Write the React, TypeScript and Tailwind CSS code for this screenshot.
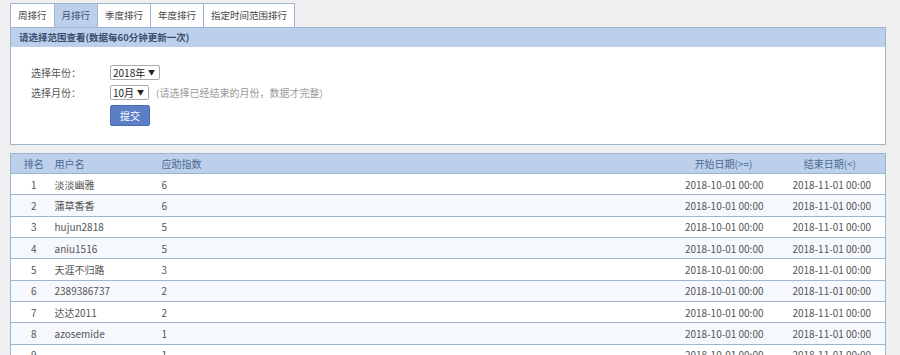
import React from "react";

const rows = [
  { rank: 1, name: "淡淡幽雅", score: 6 },
  { rank: 2, name: "蒲草香香", score: 6 },
  { rank: 3, name: "hujun2818", score: 5 },
  { rank: 4, name: "aniu1516", score: 5 },
  { rank: 5, name: "天涯不归路", score: 3 },
  { rank: 6, name: "2389386737", score: 2 },
  { rank: 7, name: "达达2011", score: 2 },
  { rank: 8, name: "azosemide", score: 1 },
  { rank: 9, name: "", score: 1 },
];

const tabs = ["周排行", "月排行", "季度排行", "年度排行", "指定时间范围排行"];

export default function App() {
  return (
    <div className="min-h-[355px] bg-[#efefef] pl-[10px] pt-[3px] text-[10px] text-[#555] [font-family:'Noto_Sans_CJK_SC','Noto_Sans',sans-serif]">
      <div className="w-[876px]">
        <div className="flex">
          {tabs.map((t, i) => (
            <div
              key={t}
              className={
                "h-[24px] border border-b-0 border-[#9db4d2] px-[7px] text-[9.5px] leading-[22px] -ml-px first:ml-0 " +
                (i === 1 ? "bg-[#bcd0ec] text-[#3a4f6e]" : "bg-white text-[#444]")
              }
            >
              {t}
            </div>
          ))}
        </div>
        <div className="border border-[#9db4d2] bg-white">
          <div className="h-[19px] bg-[#bcd0ec] pl-[8px] text-[9.5px] leading-[19px] font-semibold text-[#3a4f6e]">
            请选择范围查看(数据每60分钟更新一次)
          </div>
          <div className="pl-[20px] pt-[17px] pb-[18px]">
            <div className="flex items-center h-[16px]">
              <span className="w-[79px]">选择年份：</span>
              <div className="flex h-[15px] w-[50px] items-center border border-[#aaa] rounded-[2px] pl-[2px] text-[#222]">
                2018年<span className="ml-auto mr-[4px] text-[7px]">▼</span>
              </div>
            </div>
            <div className="flex items-center h-[16px] mt-[4px]">
              <span className="w-[79px]">选择月份：</span>
              <div className="flex h-[15px] w-[39px] items-center border border-[#aaa] rounded-[2px] pl-[2px] text-[#222]">
                10月<span className="ml-auto mr-[4px] text-[7px]">▼</span>
              </div>
              <span className="ml-[7px] text-[#999]">(请选择已经结束的月份，数据才完整)</span>
            </div>
            <button className="ml-[79px] mt-[5px] h-[21px] w-[40px] rounded-[2px] bg-[#5b7ec6] text-white border border-[#4a6cb0]">
              提交
            </button>
          </div>
        </div>
        <table className="mt-[8px] w-full border-collapse border border-[#9db4d2] bg-white">
          <thead>
            <tr className="h-[20px] bg-[#bcd0ec] text-[#4c6a92]">
              <th className="w-[44px] font-normal text-center pl-[2px]">排名</th>
              <th className="w-[107px] font-normal text-left">用户名</th>
              <th className="font-normal text-left">应助指数</th>
              <th className="w-[200px] font-normal text-right pr-[11px]">开始日期(&gt;=)</th>
              <th className="w-[122px] font-normal text-right pr-[29px]">结束日期(&lt;)</th>
            </tr>
          </thead>
          <tbody>
            {rows.map((r) => (
              <tr
                key={r.rank}
                className="h-[21.35px] border-t border-[#9db4d2] even:bg-[#f5f8fc]"
              >
                <td className="text-center pl-[2px]">{r.rank}</td>
                <td>{r.name}</td>
                <td>{r.score}</td>
                <td className="text-right">2018-10-01 00:00</td>
                <td className="text-right pr-[14px]">2018-11-01 00:00</td>
              </tr>
            ))}
          </tbody>
        </table>
      </div>
    </div>
  );
}
